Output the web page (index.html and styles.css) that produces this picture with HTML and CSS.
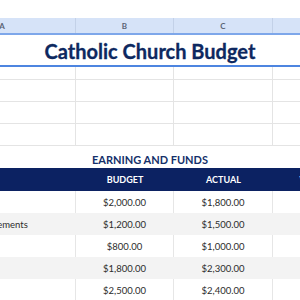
FILE: index.html
```html
<!DOCTYPE html>
<html>
<head>
<meta charset="utf-8">
<link rel="stylesheet" href="styles.css">
</head>
<body>
<div class="sheet">
  <div class="topbar"></div>
  <div class="row colhead">
    <div class="cell">A</div>
    <div class="cell">B</div>
    <div class="cell">C</div>
    <div class="cell">D</div>
  </div>
  <div class="title">Catholic Church Budget</div>
  <div class="row grid short"><div class="cell"></div><div class="cell"></div><div class="cell"></div><div class="cell"></div></div>
  <div class="row grid"><div class="cell"></div><div class="cell"></div><div class="cell"></div><div class="cell"></div></div>
  <div class="row grid"><div class="cell"></div><div class="cell"></div><div class="cell"></div><div class="cell"></div></div>
  <div class="row grid"><div class="cell"></div><div class="cell"></div><div class="cell"></div><div class="cell"></div></div>
  <div class="section">EARNING AND FUNDS</div>
  <div class="row tablehead">
    <div class="cell left">CATEGORY</div>
    <div class="cell">BUDGET</div>
    <div class="cell">ACTUAL</div>
    <div class="cell">VARIANCE</div>
  </div>
  <div class="row data">
    <div class="cell left">Donations</div>
    <div class="cell">$2,000.00</div>
    <div class="cell">$1,800.00</div>
    <div class="cell">-$200.00</div>
  </div>
  <div class="row data alt">
    <div class="cell left">Building Improvements</div>
    <div class="cell">$1,200.00</div>
    <div class="cell">$1,500.00</div>
    <div class="cell">$300.00</div>
  </div>
  <div class="row data">
    <div class="cell left">Fundraisers</div>
    <div class="cell">$800.00</div>
    <div class="cell">$1,000.00</div>
    <div class="cell">$200.00</div>
  </div>
  <div class="row data alt">
    <div class="cell left">Tithes</div>
    <div class="cell">$1,800.00</div>
    <div class="cell">$2,300.00</div>
    <div class="cell">$500.00</div>
  </div>
  <div class="row data">
    <div class="cell left">Offerings</div>
    <div class="cell">$2,500.00</div>
    <div class="cell">$2,400.00</div>
    <div class="cell">-$100.00</div>
  </div>
</div>
</body>
</html>
```
FILE: styles.css
```css
html, body {
  margin: 0;
  padding: 0;
  background: #ffffff;
  overflow: hidden;
  width: 300px;
  height: 300px;
}
.sheet {
  margin-left: -71px;
  width: 600px;
  font-family: "Lato", "Open Sans", sans-serif;
}
.topbar {
  height: 18px;
  background: #ffffff;
}
.row {
  display: grid;
  grid-template-columns: 147px 98px 99px 98px;
}
.cell {
  box-sizing: border-box;
  display: flex;
  align-items: center;
  justify-content: center;
  white-space: nowrap;
  overflow: hidden;
}
.colhead {
  height: 17px;
  background: #d6e3f8;
  border-bottom: 2px solid #7ea7ea;
  box-sizing: border-box;
}
.colhead .cell {
  border-right: 1px solid #c3d1e8;
  font-size: 8px;
  font-weight: 700;
  color: #5a6475;
}
.title {
  height: 32px;
  box-sizing: border-box;
  border-bottom: 2px solid #4d85e0;
  display: flex;
  align-items: center;
  justify-content: center;
  width: 442px;
  font-size: 20px;
  font-weight: 700;
  color: #0d2860;
  padding-top: 2px;
  -webkit-text-stroke: 0.3px #0d2860;
}
.grid {
  height: 22px;
}
.grid.short {
  height: 13px;
}
.grid .cell {
  border-right: 1px solid #e4e4e4;
  border-bottom: 1px solid #e4e4e4;
}
.section {
  height: 22px;
  width: 442px;
  display: flex;
  align-items: flex-end;
  justify-content: center;
  font-size: 11px;
  font-weight: 700;
  color: #14306a;
  padding-bottom: 2px;
  box-sizing: border-box;
}
.tablehead {
  height: 23px;
  background: #0c2262;
}
.tablehead .cell {
  color: #ffffff;
  font-size: 9px;
  font-weight: 700;
}
.left {
  justify-content: flex-start;
}
.data {
  height: 22px;
}
.data .cell {
  font-size: 9.5px;
  color: #2c2c2c;
  border-right: 1px solid #e6e6e6;
}
.data.alt {
  background: #f3f3f3;
}
.data.alt .cell {
  border-right-color: #f3f3f3;
}
.tablehead .cell.left {
  padding-left: 3px;
}
.data .cell.left {
  padding-left: 3px;
}
```
